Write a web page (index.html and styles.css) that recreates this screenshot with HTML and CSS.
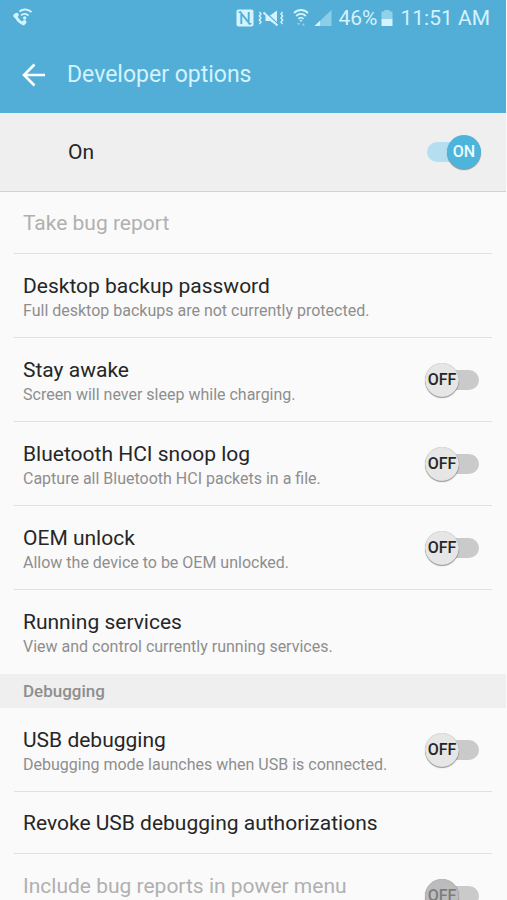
FILE: index.html
```html
<!DOCTYPE html>
<html lang="en">
  <head>
    <meta charset="UTF-8" />
    <meta name="viewport" content="width=device-width, initial-scale=1.0" />
    <title>Developer options</title>
    <link rel="stylesheet" href="styles.css">
  </head>
  <body>
    <header class="top">
      <div class="status-bar">
        <svg class="call-icon" width="21" height="20" viewBox="0 0 21 20" fill="none" stroke="currentColor">
          <path d="M3.500 6.500C4 11 8 15 12.500 16" stroke-width="3" />
          <path d="M3.200 7.800 4.800 6.800M11.300 15.200 12.500 14" stroke-width="4" stroke-linecap="round" />
          <path d="M7.500 3.600C11 0.400 16.500 0.800 19.500 4.200" stroke-width="2" />
          <path d="M9 7.400c2.400-2.200 5.400-2 7.400 0.200" stroke-width="1.900" />
          <circle cx="12.700" cy="10" r="1.700" fill="currentColor" stroke="none" />
        </svg>
        <div class="status-right">
          <svg width="18" height="18" viewBox="0 0 18 18">
            <rect x="0.500" y="0.500" width="17" height="17" rx="2" fill="currentColor" />
            <path d="M5.300 15V4.500L12.700 13.500V3" fill="none" stroke="#52aed6" stroke-width="1.900" />
            <path d="M2.500 3.200h3M15.500 14.800h-3" fill="none" stroke="#52aed6" stroke-width="1.400" />
          </svg>
          <svg class="mute-icon" width="26" height="18" viewBox="0 0 26 18" fill="none" stroke="currentColor">
            <path d="M1.500 3l1.500 2-1.700 2L3 9l-1.700 2L3 13l-1.500 2M24.500 3 23 5l1.700 2L23 9l1.700 2-1.700 2 1.500 2" stroke-width="1.400" />
            <path d="M7.500 6.500H12L19 1.500v15L12 12H7.500z" fill="currentColor" stroke="none" />
            <path d="M6.500 2.500 20.500 15.500" stroke="#52aed6" stroke-width="1.600" />
            <path d="M5.500 3.500 19.500 16.500" stroke-width="1.900" />
          </svg>
          <svg class="wifi-icon" width="16" height="18" viewBox="0 0 16 18" fill="none" stroke="currentColor" stroke-width="1.800">
            <path d="M1 4c4-4 10-4 14 0M3.200 7c2.800-2.800 6.800-2.800 9.600 0M5.400 9.800c1.600-1.500 3.600-1.500 5.200 0" />
            <path d="M6.500 11h3L8 13z" fill="currentColor" stroke="none" />
            <path d="M4 14l2 2.500 1-2.500zM9 16.500l1-2.500 2 2.500z" fill="currentColor" stroke="none" opacity="0.5" />
          </svg>
          <svg class="signal-icon" width="18" height="18" viewBox="0 0 18 18" fill="currentColor">
            <path d="M0.500 17 17.500 1v16z" opacity="0.45" />
            <path d="M0.500 17 6 11.800V17z" />
          </svg>
          <span class="battery-text">46%</span>
          <svg class="battery-icon" width="12" height="18" viewBox="0 0 12 18" fill="currentColor">
            <path d="M3.500 1h5v1.500H11.500v8H0.500v-8h3z" opacity="0.5" />
            <rect x="0.500" y="10" width="11" height="7" />
          </svg>
          <span class="clock">11:51 AM</span>
        </div>
      </div>
      <div class="app-bar">
        <button class="back" aria-label="Back">
          <svg width="24" height="24" viewBox="0 0 24 24" fill="none" stroke="currentColor" stroke-width="2.600">
            <path d="M23 12H2.500M12.500 1.500 2 12l10.500 10.500" />
          </svg>
        </button>
        <h1>Developer options</h1>
      </div>
    </header>

    <div class="master">
      <label for="dev-options">On</label>
      <span class="switch">
        <input type="checkbox" id="dev-options" checked />
        <span class="thumb thumb-on">ON</span>
        <span class="thumb thumb-off">OFF</span>
      </span>
    </div>

    <main class="settings">
      <ul>
        <li class="row disabled">
          <span class="title">Take bug report</span>
        </li>
        <li class="row">
          <div class="text">
            <span class="title">Desktop backup password</span>
            <span class="summary">Full desktop backups are not currently protected.</span>
          </div>
        </li>
        <li class="row">
          <label class="text" for="stay-awake">
            <span class="title">Stay awake</span>
            <span class="summary">Screen will never sleep while charging.</span>
          </label>
          <span class="switch">
            <input type="checkbox" id="stay-awake" />
            <span class="thumb thumb-on">ON</span>
            <span class="thumb thumb-off">OFF</span>
          </span>
        </li>
        <li class="row">
          <label class="text" for="snoop-log">
            <span class="title">Bluetooth HCI snoop log</span>
            <span class="summary">Capture all Bluetooth HCI packets in a file.</span>
          </label>
          <span class="switch">
            <input type="checkbox" id="snoop-log" />
            <span class="thumb thumb-on">ON</span>
            <span class="thumb thumb-off">OFF</span>
          </span>
        </li>
        <li class="row">
          <label class="text" for="oem-unlock">
            <span class="title">OEM unlock</span>
            <span class="summary">Allow the device to be OEM unlocked.</span>
          </label>
          <span class="switch">
            <input type="checkbox" id="oem-unlock" />
            <span class="thumb thumb-on">ON</span>
            <span class="thumb thumb-off">OFF</span>
          </span>
        </li>
        <li class="row">
          <div class="text">
            <span class="title">Running services</span>
            <span class="summary">View and control currently running services.</span>
          </div>
        </li>
      </ul>

      <h2>Debugging</h2>
      <ul>
        <li class="row">
          <label class="text" for="usb-debugging">
            <span class="title">USB debugging</span>
            <span class="summary">Debugging mode launches when USB is connected.</span>
          </label>
          <span class="switch">
            <input type="checkbox" id="usb-debugging" />
            <span class="thumb thumb-on">ON</span>
            <span class="thumb thumb-off">OFF</span>
          </span>
        </li>
        <li class="row">
          <span class="title">Revoke USB debugging authorizations</span>
        </li>
        <li class="row tall disabled">
          <label class="text" for="power-menu">
            <span class="title">Include bug reports in power menu</span>
          </label>
          <span class="switch">
            <input type="checkbox" id="power-menu" disabled />
            <span class="thumb thumb-on">ON</span>
            <span class="thumb thumb-off">OFF</span>
          </span>
        </li>
      </ul>
    </main>
  </body>
</html>
```
FILE: styles.css
```css
* {
  box-sizing: border-box;
}
body {
  font-family: Roboto, "Liberation Sans", sans-serif;
  height: 100vh;
  display: flex;
  flex-direction: column;
  margin: 0;
  padding-right: 1px;
  overflow: hidden;
  background: #fafafa;
  color: #262626;
}
h1,
h2,
ul {
  margin: 0;
  padding: 0;
  font-weight: normal;
}
svg {
  display: block;
  flex: none;
}

/* status bar and title */
.top {
  flex: none;
  background: #52aed6;
  color: #d3f3ff;
}
.status-bar {
  display: flex;
  align-items: center;
  justify-content: space-between;
  height: 36px;
  padding: 0 16px 0 12px;
}
.status-right {
  display: flex;
  align-items: center;
  font-size: 21px;
  line-height: 24px;
}
.mute-icon {
  margin-left: 4px;
}
.wifi-icon {
  margin-left: 9px;
}
.signal-icon {
  margin-left: 5px;
}
.battery-text {
  margin-left: 6px;
}
.battery-icon {
  margin-left: 4px;
}
.clock {
  margin-left: 7px;
}
.app-bar {
  display: flex;
  align-items: center;
  height: 77px;
  padding: 0 22px;
}
.back {
  margin: 0;
  padding: 0;
  border: none;
  background: none;
  color: white;
  cursor: pointer;
}
h1 {
  margin-left: 21px;
  font-size: 23px;
  line-height: 28px;
}

/* main on/off bar */
.master {
  display: flex;
  flex: none;
  align-items: center;
  justify-content: space-between;
  height: 79px;
  padding: 0 25px 0 68px;
  border-bottom: 1px solid #d2d2d2;
  background: #efefef;
  font-size: 21px;
}

/* settings list */
.settings {
  flex: 1;
  min-height: 0;
  overflow-y: auto;
  scrollbar-width: none;
}
ul {
  padding: 0 14px;
  list-style: none;
}
.row {
  display: flex;
  align-items: center;
  justify-content: space-between;
  padding: 17px 13px 16px 9px;
  border-bottom: 1px solid #e0e0e0;
}
.row:last-child {
  border-bottom-color: transparent;
}
.text {
  flex: 1;
  padding-top: 1px;
}
.tall {
  min-height: 84px;
}
.tall .text {
  align-self: flex-start;
}
.title,
.summary {
  display: block;
}
.title {
  font-size: 21px;
  line-height: 28px;
}
.summary {
  padding-top: 1px;
  font-size: 16px;
  line-height: 20px;
  color: #8e8e8e;
}
.disabled .title {
  color: #b0b0b0;
}
h2 {
  padding: 0 23px;
  background: #efefef;
  color: #8e8e8e;
  font-size: 17px;
  font-weight: 500;
  line-height: 34px;
}

/* switch */
.switch {
  position: relative;
  display: flex;
  align-items: center;
  flex: none;
  width: 54px;
  height: 34px;
}
.switch input {
  appearance: none;
  width: 100%;
  height: 20px;
  margin: 0;
  border-radius: 10px;
  background: #cacaca;
  cursor: pointer;
}
.switch input:checked {
  background: #b5dff0;
}
.thumb {
  position: absolute;
  top: 0;
  width: 34px;
  height: 34px;
  border-radius: 50%;
  font-size: 16px;
  font-weight: 500;
  line-height: 34px;
  text-align: center;
  pointer-events: none;
}
.thumb-off {
  left: 0;
  background: #e6e6e6;
  box-shadow: 0 1px 1px rgba(0, 0, 0, 0.4), inset 0 0 1px rgba(0, 0, 0, 0.3);
}
.thumb-on {
  right: 0;
  display: none;
  background: #4db5dc;
  box-shadow: 0 1px 1px rgba(0, 0, 0, 0.4);
  color: #eefaff;
}
input:checked ~ .thumb-on {
  display: block;
}
input:checked ~ .thumb-off {
  display: none;
}
input:disabled ~ .thumb-off {
  background: #bcbcbc;
  color: #7c7c7c;
}
```
